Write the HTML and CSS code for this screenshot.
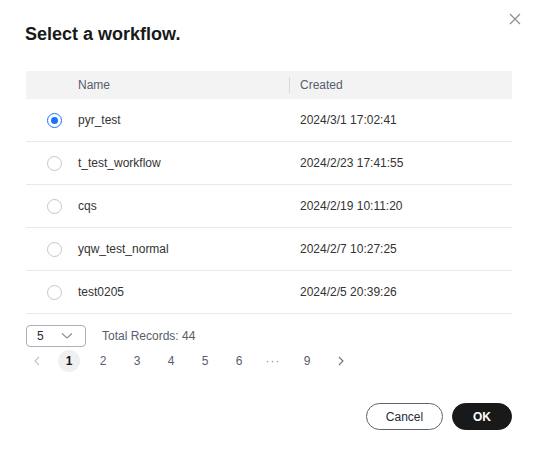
FILE: index.html
```html
<!DOCTYPE html>
<html>
<head>
<meta charset="utf-8">
<link rel="stylesheet" href="styles.css">
</head>
<body>
<div class="dialog">
  <button class="close" aria-label="Close">
    <svg width="12" height="12" viewBox="0 0 12 12"><path d="M1 1L11 11M11 1L1 11" stroke="#8a8e99" stroke-width="1.2" fill="none"/></svg>
  </button>
  <h1 class="title">Select a workflow.</h1>
  <div class="table">
    <div class="thead">
      <div class="c-radio"></div>
      <div class="c-name">Name</div>
      <div class="c-created"><span class="sep"></span>Created</div>
    </div>
    <div class="row">
      <div class="c-radio"><span class="radio checked"></span></div>
      <div class="c-name">pyr_test</div>
      <div class="c-created">2024/3/1 17:02:41</div>
    </div>
    <div class="row">
      <div class="c-radio"><span class="radio"></span></div>
      <div class="c-name">t_test_workflow</div>
      <div class="c-created">2024/2/23 17:41:55</div>
    </div>
    <div class="row">
      <div class="c-radio"><span class="radio"></span></div>
      <div class="c-name">cqs</div>
      <div class="c-created">2024/2/19 10:11:20</div>
    </div>
    <div class="row">
      <div class="c-radio"><span class="radio"></span></div>
      <div class="c-name">yqw_test_normal</div>
      <div class="c-created">2024/2/7 10:27:25</div>
    </div>
    <div class="row">
      <div class="c-radio"><span class="radio"></span></div>
      <div class="c-name">test0205</div>
      <div class="c-created">2024/2/5 20:39:26</div>
    </div>
  </div>
  <div class="pager-top">
    <div class="select">
      <span>5</span>
      <svg width="12" height="8" viewBox="0 0 12 8"><path d="M1 1.5L6 6L11 1.5" stroke="#8a8e99" stroke-width="1.1" fill="none"/></svg>
    </div>
    <span class="total">Total Records: 44</span>
  </div>
  <div class="pages">
    <span class="pg arrow prev"><svg width="8" height="10" viewBox="0 0 8 10"><path d="M6 1L2 5L6 9" stroke="#c2c4c9" stroke-width="1.1" fill="none"/></svg></span>
    <span class="pg current">1</span>
    <span class="pg">2</span>
    <span class="pg">3</span>
    <span class="pg">4</span>
    <span class="pg">5</span>
    <span class="pg">6</span>
    <span class="pg dots">···</span>
    <span class="pg">9</span>
    <span class="pg arrow"><svg width="8" height="10" viewBox="0 0 8 10"><path d="M2 1L6 5L2 9" stroke="#6d717c" stroke-width="1.1" fill="none"/></svg></span>
  </div>
  <div class="actions">
    <button class="btn cancel">Cancel</button>
    <button class="btn ok">OK</button>
  </div>
</div>
</body>
</html>
```
FILE: styles.css
```css
* { box-sizing: border-box; }
html, body { margin: 0; padding: 0; background: #fff; }
body { font-family: "Liberation Sans", Arial, sans-serif; font-size: 12px; color: #252b3a; }
.dialog { position: relative; width: 537px; height: 452px; padding: 22px 25px 0 26px; }
.close { position: absolute; top: 12px; right: 15px; width: 14px; height: 14px; padding: 0; border: 0; background: none; display: flex; align-items: center; justify-content: center; }
.title { margin: 0 0 0 -1px; font-size: 18px; font-weight: bold; line-height: 24px; color: #191919; }
.table { margin-top: 25px; }
.thead { display: flex; align-items: center; height: 28px; background: #f3f3f3; color: #575d6c; }
.row { display: flex; align-items: center; height: 43px; border-bottom: 1px solid #e9e9e9; color: #333; }
.c-radio { width: 52px; display: flex; justify-content: center; padding-left: 4px; }
.c-name { width: 211px; }
.c-created { position: relative; flex: 1; padding-left: 11px; }
.sep { position: absolute; left: 0; top: -1px; width: 1px; height: 16px; background: #dadada; }
.radio { width: 15px; height: 15px; border-radius: 50%; border: 1px solid #c4c6cc; display: block; }
.radio.checked { border-color: #1a73ff; position: relative; }
.radio.checked::after { content: ""; position: absolute; left: 3px; top: 3px; width: 7px; height: 7px; border-radius: 50%; background: #1a73ff; }
.pager-top { display: flex; align-items: center; margin-top: 11px; height: 22px; }
.select { width: 60px; height: 22px; border: 1px solid #adb0b8; border-radius: 4px; display: flex; align-items: center; justify-content: space-between; padding: 0 12px 0 10px; color: #252b3a; }
.total { margin-left: 16px; color: #575d6c; }
.pages { display: flex; align-items: center; height: 24px; margin-top: 2px; }
.pg { width: 22px; height: 22px; border-radius: 50%; display: flex; align-items: center; justify-content: center; margin-right: 12px; color: #575d6c; }
.pg.prev { margin-right: 10px; }
.pg.current { background: #f0f0f0; color: #191919; font-weight: bold; }
.pg.dots { color: #8a8e99; letter-spacing: 1px; font-size: 12px; }
.actions { display: flex; justify-content: flex-end; gap: 9px; margin-top: 30px; }
.btn { height: 27px; border-radius: 14px; font-family: "Liberation Sans", Arial, sans-serif; font-size: 12px; padding: 0; }
.cancel { width: 77px; background: #fff; border: 1px solid #5f636c; color: #252b3a; }
.ok { width: 60px; background: #191919; border: 1px solid #191919; color: #fff; font-weight: bold; }
```
